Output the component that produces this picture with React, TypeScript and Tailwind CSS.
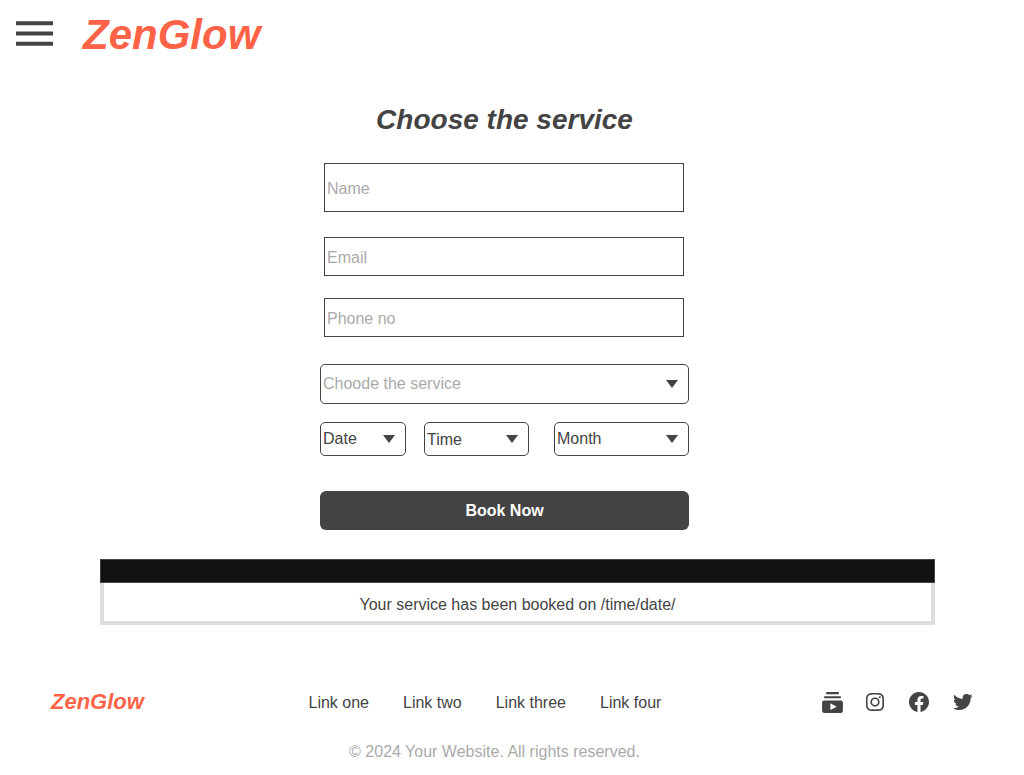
import type { ReactNode } from "react";
import { BiLogoFacebookCircle, BiLogoInstagram, BiLogoTwitter } from "react-icons/bi";
import { MdSubscriptions } from "react-icons/md";

const links = ["Link one", "Link two", "Link three", "Link four"];

function Field({ id, label, type, className }: { id: string; label: string; type: string; className: string }) {
  return (
    <div className="px-1">
      <label htmlFor={id} className="sr-only">{label}</label>
      <input
        id={id}
        type={type}
        placeholder={label}
        className={`block w-full border border-[#444] bg-white px-[2px] pt-[2px] placeholder:text-[#aaa] placeholder:opacity-100 ${className}`}
      />
    </div>
  );
}

function Picker({ id, label, className, children }: { id: string; label: string; className: string; children?: ReactNode }) {
  return (
    <div className="relative">
      <label htmlFor={id} className="sr-only">{label}</label>
      <select
        id={id}
        className={`block w-full appearance-none rounded-[5px] border border-[#444] bg-white px-[2px] ${className}`}
      >
        <option>{label}</option>
        {children}
      </select>
      <svg viewBox="0 0 12 8" className="pointer-events-none absolute inset-y-0 right-[11px] my-auto h-2 w-3 fill-[#444]" aria-hidden="true">
        <path d="M0 0h12L6 8z" />
      </svg>
    </div>
  );
}

export default function App() {
  return (
    <div className="min-h-screen bg-white font-['Liberation_Sans',Arial,sans-serif] text-base text-[#444]">
      <header className="flex items-center gap-[30px] px-4 pt-[5px]">
        <button type="button" aria-label="Open menu" className="mb-1">
          <svg viewBox="0 0 37 25" className="block h-[25px] w-[37px] fill-[#444]" aria-hidden="true">
            <path d="M0 .2h37v4H0zM0 10.4h37v4H0zM0 20.8h37v4H0z" />
          </svg>
        </button>
        <a href="#" className="text-[42px] leading-[60px] font-bold text-[#ff6347] italic">ZenGlow</a>
      </header>

      <main>
        <form className="mr-[15px] pt-[35px]" onSubmit={(e) => e.preventDefault()}>
          <h1 className="text-center text-[28px] leading-10 font-bold italic">Choose the service</h1>
          <div className="mx-auto mt-[23px] w-full max-w-[369px]">
            <div className="pr-px">
              <Field id="name" label="Name" type="text" className="h-[49px]" />
              <div className="mt-[25px]">
                <Field id="email" label="Email" type="email" className="h-[39px]" />
              </div>
              <div className="mt-[22px]">
                <Field id="phone" label="Phone no" type="tel" className="h-[39px]" />
              </div>
            </div>
            <div className="mt-[27px]">
              <Picker id="service" label="Choode the service" className="h-10 text-[#aaa]" />
            </div>
            <div className="mt-[18px] flex">
              <div className="w-[86px]">
                <Picker id="date" label="Date" className="h-[34px]" />
              </div>
              <div className="ml-[18px] w-[105px]">
                <Picker id="time" label="Time" className="h-[34px] pt-[2px]" />
              </div>
              <div className="ml-[25px] flex-1">
                <Picker id="month" label="Month" className="h-[34px]" />
              </div>
            </div>
            <button type="submit" className="mt-[35px] block h-[39px] w-full rounded-[6px] bg-[#444] font-bold text-white">
              Book Now
            </button>
          </div>
        </form>

        <section role="status" className="mt-[29px] mr-[89px] ml-[100px]">
          <div className="h-6 border border-[#444] bg-[#111]" />
          <p className="border-4 border-t-0 border-[#ddd] pt-[10px] pb-1 text-center leading-6">
            Your service has been booked on /time/date/
          </p>
        </section>
      </main>

      <footer className="pt-[65px] pb-3">
        <div className="flex items-start justify-between pr-[49px] pl-[51px]">
          <a href="#" className="text-[22px] leading-6 font-bold text-[#ff6347] italic">ZenGlow</a>
          <nav className="ml-[6px] flex gap-[34px] leading-[26px]">
            {links.map((link) => (
              <a key={link} href="#">{link}</a>
            ))}
          </nav>
          <div className="flex items-start gap-5">
            <a href="#" aria-label="Videos" className="-mr-[2px]"><MdSubscriptions className="size-[25px]" /></a>
            <a href="#" aria-label="Instagram"><BiLogoInstagram className="size-6" /></a>
            <a href="#" aria-label="Facebook"><BiLogoFacebookCircle className="size-6" /></a>
            <a href="#" aria-label="Twitter"><BiLogoTwitter className="size-6" /></a>
          </div>
        </div>
        <p className="mt-6 mr-[35px] text-center leading-6 text-[#aaa]">© 2024 Your Website. All rights reserved.</p>
      </footer>
    </div>
  );
}
